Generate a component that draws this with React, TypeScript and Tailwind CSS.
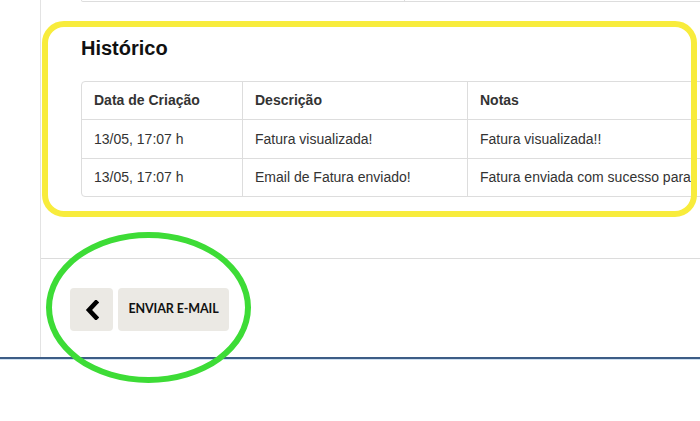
import React from "react";

const rows = [
  ["13/05, 17:07 h", "Fatura visualizada!", "Fatura visualizada!!"],
  ["13/05, 17:07 h", "Email de Fatura enviado!", "Fatura enviada com sucesso para"],
];

export default function App() {
  return (
    <div className="relative w-[700px] h-[421px] overflow-hidden bg-white font-['Liberation_Sans',Arial,sans-serif] text-[#333]">
      <div className="flex h-[357px]">
        <div className="w-[40px] shrink-0" />
        <div className="flex-1 min-w-0 border-l border-[#e3e3e3] flex flex-col">
          {/* remnant of a table above */}
          <div className="pl-[40px]">
            <div className="flex w-[700px] h-[2px] border-l border-r border-b border-[#dddddd] rounded-b-[4px]">
              <div className="w-[323px] border-r border-[#dddddd]" />
            </div>
          </div>
          {/* Histórico section */}
          <div className="pl-[40px] pt-[34px] h-[257px] border-b border-[#dcdcdc]">
            <h2 className="text-[20px] leading-[24px] font-bold text-[#111]">Histórico</h2>
            <div className="mt-[21px] w-[700px] border border-[#dddddd] rounded-[4px] text-[14px]">
              <div className="flex h-[38px] items-center border-b border-[#dddddd] font-bold">
                <div className="w-[161px] h-full flex items-center pl-[12px] border-r border-[#dddddd]">Data de Criação</div>
                <div className="w-[225px] h-full flex items-center pl-[12px] border-r border-[#dddddd]">Descrição</div>
                <div className="flex-1 h-full flex items-center pl-[12px]">Notas</div>
              </div>
              {rows.map((r, i) => (
                <div
                  key={i}
                  className={
                    i === 0
                      ? "flex h-[39px] items-center border-b border-[#dddddd]"
                      : "flex h-[37px] items-center"
                  }
                >
                  <div className="w-[161px] h-full flex items-center pl-[12px] border-r border-[#dddddd]">{r[0]}</div>
                  <div className="w-[225px] h-full flex items-center pl-[12px] border-r border-[#dddddd]">{r[1]}</div>
                  <div className="flex-1 h-full flex items-center pl-[12px] whitespace-nowrap">{r[2]}</div>
                </div>
              ))}
            </div>
          </div>
          {/* buttons */}
          <div className="pl-[29px] pt-[29px] flex gap-[5px]">
            <button className="w-[43px] h-[43px] rounded-[4px] bg-[#ebe9e4] flex items-center justify-center">
              <svg width="14" height="20" viewBox="0 0 14 20">
                <path d="M11 2.5 L4 10 L11 17.5" fill="none" stroke="#000" strokeWidth="4.6" strokeLinejoin="miter" strokeLinecap="square" />
              </svg>
            </button>
            <button className="w-[111px] h-[43px] rounded-[4px] bg-[#ebe9e4] flex items-center justify-center font-['Lato',sans-serif] font-bold text-[12.5px] text-[#111] tracking-[-0.1px]">
              ENVIAR E-MAIL
            </button>
          </div>
        </div>
      </div>
      <div className="h-[2px] bg-[#3d5d86]" />
      <div className="h-[1px] bg-[#cfe0f1]" />

      {/* annotations */}
      <div className="absolute left-[42px] top-[21px] w-[655px] h-[196px] border-[6px] border-[#f8ec3c] rounded-[22px] pointer-events-none" />
      <div className="absolute left-[46px] top-[232px] w-[205px] h-[151px] border-[6px] border-[#3ddc36] rounded-[50%] pointer-events-none" />
    </div>
  );
}
